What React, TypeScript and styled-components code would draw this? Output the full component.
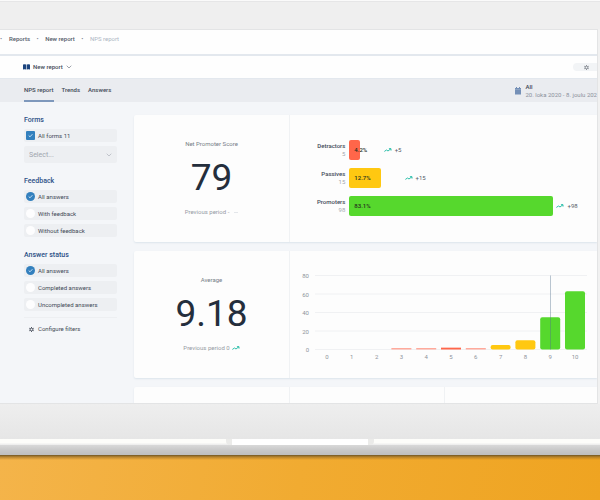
import React from "react";
import styled, { createGlobalStyle } from "styled-components";

const GlobalStyle = createGlobalStyle`
  *, *::before, *::after { box-sizing: border-box; }
  body {
    margin: 0;
    background: #f1a92d;
    color: #434a57;
    font-family: Roboto, "Liberation Sans", sans-serif;
    font-size: 6px;
    line-height: 8px;
  }
  button, select, input { font: inherit; color: inherit; margin: 0; }
  svg { display: block; flex: none; }
`;

/* Laptop */

const Page = styled.div`
  display: flex;
  flex-direction: column;
  height: 100vh;
  overflow: hidden;
`;

const TopBezel = styled.div`
  flex: none;
  height: 29px;
  border-top: 1px solid #fafafa;
  background: #efefef;
  box-shadow: inset 0 1px 0 #e6e6e7;
`;

const ScreenFrame = styled.div`
  flex: 1;
  min-height: 0;
  display: flex;
  padding-right: 2px;
  background: #f1f1f1;
`;

const Screen = styled.div`
  flex: 1;
  min-width: 0;
  overflow: hidden;
  border: solid #e3e4e5;
  border-width: 1px 1px 1px 0;
  background: #f4f6f9;
`;

const Chin = styled.div`
  flex: none;
  height: 35px;
  background: linear-gradient(#eeeeee, #e6e6e6);
`;

const Lip = styled.div`
  flex: none;
  display: flex;
  justify-content: center;
  height: 6px;
  background: linear-gradient(#fdfdfa 60%, #ebebeb);
`;

const Notch = styled.div`
  width: 148px;
  height: 6px;
  border: solid #ebebe9;
  border-width: 0 6px;
  border-radius: 0 0 4px 4px;
  background: #ffffff;
`;

const Base = styled.div`
  flex: none;
  height: 10px;
  background: linear-gradient(#d9d9d9, #c8c8c8 50%, #bebebe);
`;

const Desk = styled.div`
  flex: none;
  height: 45px;
  background:
    linear-gradient(#6f5524, rgba(160, 115, 40, 0.7) 2px, rgba(220, 155, 50, 0) 5px),
    linear-gradient(100deg, #f4b44a, #f1ab31 50%, #efa421);
`;

/* Header */

const Crumbs = styled.nav`
  display: flex;
  align-items: center;
  height: 24px;
  padding-bottom: 6px;
  background: #fefefe;
  font-weight: 500;
`;

const Crumb = styled.a`
  color: #535a68;
  text-decoration: none;
  &[aria-current] { color: #adb6c4; font-weight: 400; }
`;

const Dot = styled.span<{ $first?: boolean }>`
  width: ${(p) => (p.$first ? 9 : 15)}px;
  text-align: ${(p) => (p.$first ? "left" : "center")};
  color: #7c8595;
`;

const ReportBar = styled.div`
  display: flex;
  align-items: center;
  justify-content: space-between;
  height: 25px;
  padding-left: 23px;
  border: solid #e3e8ee;
  border-width: 2px 0 1px;
  background: #fefefe;
`;

const ReportButton = styled.button`
  display: flex;
  align-items: center;
  gap: 3px;
  padding: 0;
  border: 0;
  background: none;
  font-weight: 500;
`;

const SettingsButton = styled.button`
  display: flex;
  align-items: center;
  width: 24px;
  height: 8px;
  padding: 0 0 0 11px;
  border: 0;
  border-radius: 4px 0 0 4px;
  background: #f2f4f6;
  color: #7d828a;
`;

const TabBar = styled.div`
  display: flex;
  justify-content: space-between;
  height: 23px;
  padding-left: 24px;
  background: #eaecf0;
`;

const Tabs = styled.div`
  display: flex;
  gap: 8px;
`;

const Tab = styled.button`
  padding: 0;
  border: 0;
  border-bottom: 2px solid transparent;
  background: none;
  font-weight: 500;
  &[aria-selected="true"] { border-color: #7e98bc; }
`;

const Period = styled.button`
  display: flex;
  align-items: center;
  gap: 4px;
  padding: 0;
  border: 0;
  background: none;
  text-align: left;
  white-space: nowrap;
`;

const PeriodName = styled.span`
  display: block;
  font-weight: 500;
`;

const PeriodDates = styled.span`
  display: block;
  color: #8b919c;
`;

/* Filters */

const Content = styled.div`
  display: grid;
  grid-template-columns: 93px 1fr;
  gap: 17px;
  padding: 13px 0 0 24px;
`;

const Filters = styled.form`
  display: flex;
  flex-direction: column;
  gap: 14px;
  padding-top: 1px;
`;

const FilterGroup = styled.fieldset`
  display: flex;
  flex-direction: column;
  gap: 4px;
  min-width: 0;
  margin: 0;
  padding: 0;
  border: 0;
`;

const GroupTitle = styled.legend`
  padding: 0 0 5px;
  color: #2c5086;
  font-size: 7px;
  font-weight: 500;
`;

const Option = styled.label`
  display: flex;
  align-items: center;
  gap: 3px;
  height: 13px;
  padding-left: 2px;
  border-radius: 2px;
  background: #edeff2;
`;

const Mark = styled.span`
  display: grid;
  place-items: center;
  & > * { grid-area: 1 / 1; }
`;

const Tick = styled.input<{ $round?: boolean }>`
  appearance: none;
  width: 9px;
  height: 9px;
  border-radius: ${(p) => (p.$round ? "50%" : "1px")};
  background: #fdfdfe;
  &:checked { background: #3380be; }
  & + svg { visibility: hidden; pointer-events: none; }
  &:checked + svg { visibility: visible; }
`;

const SelectBox = styled.div`
  display: grid;
  align-items: center;
  height: 17px;
  border-radius: 2px;
  background: #edeff2;
  & > * { grid-area: 1 / 1; }
  & > svg { justify-self: end; margin-right: 5px; pointer-events: none; }
`;

const Select = styled.select`
  appearance: none;
  width: 100%;
  height: 17px;
  padding: 0 5px;
  border: 0;
  background: none;
  color: #a0a5ae;
  font-size: 7px;
`;

const Configure = styled.button`
  display: flex;
  align-items: center;
  gap: 4px;
  margin-top: -8px;
  padding: 7px 0 0 5px;
  border: 0;
  border-top: 1px solid #edeff2;
  background: none;
`;

/* Cards */

const Cards = styled.main`
  display: flex;
  flex-direction: column;
  gap: 9px;
  min-width: 0;
`;

const Card = styled.section<{ $thirds?: boolean }>`
  display: grid;
  grid-template-columns: ${(p) => (p.$thirds ? "155px 155px 1fr" : "155px 1fr")};
  height: 127px;
  border-radius: 2px 0 0 2px;
  background: #fdfdfd;
  box-shadow: 0 1px 2px #dce4eb;
`;

const Cell = styled.div`
  min-width: 0;
  & + & { border-left: 1px solid #f0f2f4; }
`;

const Score = styled(Cell)`
  display: flex;
  flex-direction: column;
  align-items: center;
  padding-top: 25px;
`;

const ScoreTitle = styled.h2`
  margin: 0;
  color: #777d87;
  font-size: 6px;
  font-weight: 400;
`;

const ScoreValue = styled.strong`
  padding: 8px 0;
  color: #242e3c;
  font-size: 37px;
  line-height: 44px;
  font-weight: 400;
`;

const Previous = styled.span`
  display: flex;
  align-items: center;
  gap: 2px;
  color: #969ba4;
`;

const NoChange = styled.span`
  width: 4px;
  height: 1px;
  margin-left: 3px;
  background: #e3e6ea;
`;

const Breakdown = styled(Cell)`
  display: grid;
  grid-template-columns: auto 1fr;
  grid-auto-rows: 20px;
  align-content: start;
  gap: 8px 4px;
  padding: 25px 2px 0 27px;
`;

const GroupLabel = styled.div`
  text-align: right;
  font-weight: 500;
  padding-top: 2px;
`;

const GroupCount = styled.span`
  display: block;
  color: #a3a8b0;
  font-weight: 400;
`;

const Track = styled.div`
  display: flex;
  align-items: center;
  min-width: 0;
`;

const Bar = styled.div<{ $color: string }>`
  flex: none;
  display: flex;
  align-items: center;
  height: 20px;
  padding-left: 5px;
  border-radius: 2px;
  background: ${(p) => p.$color};
  color: #26301f;
  font-weight: 500;
  white-space: nowrap;
`;

const Trend = styled.span<{ $near?: boolean }>`
  display: flex;
  align-items: center;
  gap: 3px;
  margin-left: ${(p) => (p.$near ? 3 : 24)}px;
  color: #555c68;
`;

const ChartCell = styled(Cell)`
  padding: 20px 9px 0 8px;
`;

const ChartSvg = styled.svg`
  width: 100%;
  height: auto;
  text { font-size: 6px; fill: #8f949c; }
`;

const groups = [
  { label: "Detractors", count: 5, share: 4.2, color: "#ff664a" },
  { label: "Passives", count: 15, share: 12.7, color: "#ffc811" },
  { label: "Promoters", count: 98, share: 83.1, color: "#56d82d" },
];

const answers = [0, 0, 0, 1, 1, 2, 1, 5, 10, 35, 63];

const TrendIcon = () => (
  <svg width="8" height="6" viewBox="0 0 8 6" fill="none" stroke="#2dbfaa" strokeLinecap="round" strokeLinejoin="round">
    <path d="M.7 4.200 2.500 3 4 4 6.700 1.900M5.300 1.700H7v1.500" />
  </svg>
);

const Chevron = ({ color = "#858b96" }: { color?: string }) => (
  <svg width="6" height="4" viewBox="0 0 6 4" fill="none" stroke={color} strokeWidth=".8">
    <path d="M.7.7 3 3 5.300.7" />
  </svg>
);

const Gear = () => (
  <svg width="5" height="5" viewBox="0 0 12 12" fill="none" stroke="currentColor">
    <circle cx="6" cy="6" r="3.200" strokeWidth="2.400" />
    <path d="M6 0v2M6 10v2M.8 3l1.800 1M9.400 8l1.800 1M.8 9l1.800-1M9.400 4l1.800-1" strokeWidth="2.400" />
  </svg>
);

const CheckIcon = () => (
  <svg width="5" height="5" viewBox="0 0 5 5" fill="none" stroke="#d5e8f7" strokeWidth=".9">
    <path d="m.7 2.500 1.300 1.300L4.400 1.200" />
  </svg>
);

const BookIcon = () => (
  <svg width="7" height="6" viewBox="0 0 7 6">
    <path d="M0 .5Q1.700 0 3.200.5V5.600Q1.700 5 0 5.500zM3.800.5Q5.300 0 7 .5v5Q5.300 5 3.800 5.600z" fill="#1d457e" />
  </svg>
);

const CalendarIcon = () => (
  <svg width="6" height="8" viewBox="0 0 6 8">
    <path d="M1 0h1v1h2V0h1v1h1v6.500H0V1h1z" fill="#7590b7" />
    <path d="M0 2.500h6" stroke="#a5b6cf" strokeWidth=".5" />
  </svg>
);

type ChoiceProps = { name: string; labels: string[] };

const Choices = ({ name, labels }: ChoiceProps) => (
  <>
    {labels.map((label, i) => (
      <Option key={label}>
        <Mark>
          <Tick type="radio" name={name} $round defaultChecked={i === 0} />
          <CheckIcon />
        </Mark>
        {label}
      </Option>
    ))}
  </>
);

const barColor = (score: number, count: number) =>
  score > 8 ? "#56d82d" : score > 6 ? "#ffc811" : count > 1 ? "#ff664a" : "#ffaa9c";

const AnswerChart = () => {
  const step = 248 / 10;
  const base = 78;
  return (
    <ChartSvg viewBox="0 0 290 92" role="img" aria-label="Answers by score">
      {[80, 60, 40, 20, 0].map((value, i) => (
        <g key={value}>
          <path d={`M17 ${4.5 + i * 18.5}H289`} stroke="#f0f1f3" />
          <text x="11" y={7 + i * 18.5} textAnchor="end">{value}</text>
        </g>
      ))}
      {answers.map((count, score) => {
        const center = 29 + score * step;
        const height = count ? Math.max(1.5, count * 0.925) : 0;
        return (
          <g key={score}>
            <rect
              x={center - 10}
              y={base + 0.5 - height}
              width="20"
              height={height}
              rx={height > 3 ? 2 : 0}
              fill={barColor(score, count)}
            />
            <text x={center} y="88" textAnchor="middle">{score}</text>
          </g>
        );
      })}
      <path d="M252.500 4.500V78.500" stroke="#53708c" strokeOpacity=".4" />
    </ChartSvg>
  );
};

export default function App() {
  return (
    <Page>
      <GlobalStyle />
      <TopBezel />
      <ScreenFrame>
        <Screen>
          <Crumbs aria-label="Breadcrumb">
            <Dot $first>•</Dot>
            <Crumb href="#reports">Reports</Crumb>
            <Dot>•</Dot>
            <Crumb href="#new-report">New report</Crumb>
            <Dot>•</Dot>
            <Crumb href="#nps" aria-current="page">NPS report</Crumb>
          </Crumbs>
          <ReportBar>
            <ReportButton type="button">
              <BookIcon />
              New report
              <Chevron />
            </ReportButton>
            <SettingsButton type="button" aria-label="Settings">
              <Gear />
            </SettingsButton>
          </ReportBar>
          <TabBar>
            <Tabs role="tablist">
              <Tab type="button" role="tab" aria-selected="true">NPS report</Tab>
              <Tab type="button" role="tab" aria-selected="false">Trends</Tab>
              <Tab type="button" role="tab" aria-selected="false">Answers</Tab>
            </Tabs>
            <Period type="button">
              <CalendarIcon />
              <span>
                <PeriodName>All</PeriodName>
                <PeriodDates>20. loka 2020 - 8. joulu 202</PeriodDates>
              </span>
            </Period>
          </TabBar>
          <Content>
            <Filters>
              <FilterGroup>
                <GroupTitle>Forms</GroupTitle>
                <Option>
                  <Mark>
                    <Tick type="checkbox" defaultChecked />
                    <CheckIcon />
                  </Mark>
                  All forms 11
                </Option>
                <SelectBox>
                  <Select aria-label="Select form">
                    <option>Select...</option>
                  </Select>
                  <Chevron color="#b5b9c1" />
                </SelectBox>
              </FilterGroup>
              <FilterGroup>
                <GroupTitle>Feedback</GroupTitle>
                <Choices name="feedback" labels={["All answers", "With feedback", "Without feedback"]} />
              </FilterGroup>
              <FilterGroup>
                <GroupTitle>Answer status</GroupTitle>
                <Choices name="status" labels={["All answers", "Completed answers", "Uncompleted answers"]} />
              </FilterGroup>
              <Configure type="button">
                <Gear />
                Configure filters
              </Configure>
            </Filters>
            <Cards>
              <Card>
                <Score>
                  <ScoreTitle>Net Promoter Score</ScoreTitle>
                  <ScoreValue>79</ScoreValue>
                  <Previous>
                    Previous period -
                    <NoChange />
                  </Previous>
                </Score>
                <Breakdown>
                  {groups.map((group) => (
                    <React.Fragment key={group.label}>
                      <GroupLabel>
                        {group.label}
                        <GroupCount>{group.count}</GroupCount>
                      </GroupLabel>
                      <Track>
                        <Bar $color={group.color} style={{ width: `${group.share}%` }}>
                          {group.share}%
                        </Bar>
                        <Trend $near={group.share > 50}>
                          <TrendIcon />+{group.count}
                        </Trend>
                      </Track>
                    </React.Fragment>
                  ))}
                </Breakdown>
              </Card>
              <Card>
                <Score>
                  <ScoreTitle>Average</ScoreTitle>
                  <ScoreValue>9.18</ScoreValue>
                  <Previous>
                    Previous period 0
                    <TrendIcon />
                  </Previous>
                </Score>
                <ChartCell>
                  <AnswerChart />
                </ChartCell>
              </Card>
              <Card $thirds>
                <Cell />
                <Cell />
                <Cell />
              </Card>
            </Cards>
          </Content>
        </Screen>
      </ScreenFrame>
      <Chin />
      <Lip>
        <Notch />
      </Lip>
      <Base />
      <Desk />
    </Page>
  );
}
